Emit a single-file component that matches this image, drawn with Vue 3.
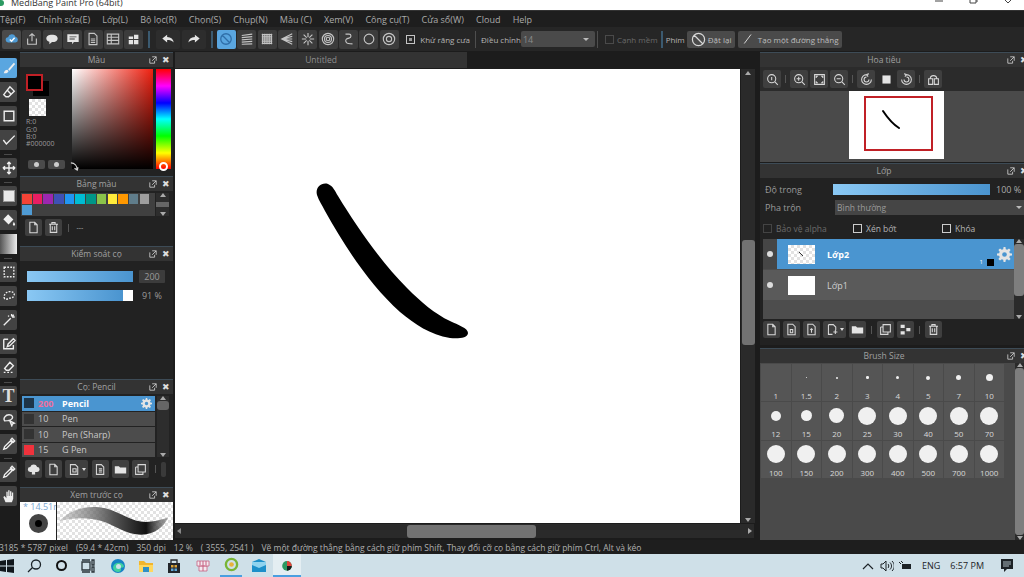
<template>
  <div class="app">
    <div class="titlebar">
      <span class="app-dot"></span>
      <span class="title-text">MediBang Paint Pro (64bit)</span>
      <div class="win-btns">
        <svg width="12" height="10" viewBox="0 0 12 10"><path d="M2 1h8" /></svg>
        <svg width="12" height="10" viewBox="0 0 12 10"><path d="M2 0v3h6V0M8 1h2" /></svg>
        <svg width="12" height="10" viewBox="0 0 12 10"><path d="M2 0l3 3 3-3" /></svg>
      </div>
    </div>

    <div class="menubar">
      <span v-for="m in menus" :key="m">{{ m }}</span>
    </div>

    <div class="toolbar">
      <button
        v-for="b in fileTools"
        :key="b.id"
        class="tb-btn"
        :class="{ cloud: b.id === 'cloud' }"
      >
        <svg class="ic" viewBox="0 0 16 16">
          <path :class="{ fill: b.fill }" :d="b.d" />
          <path v-if="b.d2" class="tick" :d="b.d2" />
        </svg>
      </button>
      <i class="tb-sep blue sep-a"></i>
      <button v-for="b in undoTools" :key="b.id" class="tb-btn undo">
        <svg class="ic" viewBox="0 0 16 16"><path class="fill" :d="b.d" /></svg>
      </button>
      <i class="tb-sep blue sep-b"></i>
      <button
        v-for="b in snapTools"
        :key="b.id"
        class="tb-btn"
        :class="{ active: b.id === 'off' }"
      >
        <svg class="ic" viewBox="0 0 16 16"><path :class="{ fill: b.fill }" :d="b.d" /></svg>
      </button>
      <span class="check on cb-a"></span>
      <span class="tb-label">Khử răng cưa</span>
      <i class="tb-sep sep-c"></i>
      <span class="tb-label">Điều chỉnh</span>
      <div class="tb-select"><span>14</span><b></b></div>
      <i class="tb-sep sep-d"></i>
      <span class="check off"></span>
      <span class="tb-label dim">Cạnh mềm</span>
      <i class="tb-sep blue sep-e"></i>
      <span class="tb-label">Phím</span>
      <button class="text-btn reset">
        <svg class="ic" width="15" height="15" viewBox="0 0 16 16"><path d="M8 1.500a6.500 6.500 0 1 0 0 13 6.500 6.500 0 0 0 0-13zM3.500 3.500l9 9" /></svg>
        Đặt lại
      </button>
      <button class="text-btn line">
        <svg class="ic" width="12" height="12" viewBox="0 0 16 16"><path d="M3 14L12 2" /></svg>
        Tạo một đường thẳng
      </button>
    </div>

    <div class="main">
      <div class="toolcol">
        <template v-for="t in tools" :key="t.id">
          <i v-if="t.sep" class="tool-sep"></i>
          <button v-else class="tool" :class="{ active: t.id === 'brush' }">
            <span v-if="t.id === 'text'" class="tool-t">T</span>
            <span v-else-if="t.id === 'color'" class="tool-color"></span>
            <span v-else-if="t.id === 'grad'" class="tool-grad"></span>
            <svg v-else class="ic" viewBox="0 0 16 16"><path :class="{ fill: t.fill, dash: t.dash }" :d="t.d" /></svg>
          </button>
        </template>
      </div>

      <div class="leftcol">
        <section class="panel p-color">
          <header class="p-head">Màu<span class="p-btns"><svg class="ic undock" viewBox="0 0 10 10"><path :d="ic.undock" /></svg><i class="close">✖</i></span></header>
          <div class="color-body">
            <div class="color-side">
              <div class="swatches">
                <span class="bg-swatch"></span>
                <span class="fg-swatch"></span>
              </div>
              <span class="alpha-swatch checker"></span>
              <div class="rgb">
                <div>R:0</div>
                <div>G:0</div>
                <div class="b-line">B:0</div>
                <div>#000000</div>
              </div>
              <div class="color-btns"><span><i></i></span><span><i></i></span></div>
            </div>
            <div class="sv-box">
              <svg class="ic swap" width="9" height="9" viewBox="0 0 10 10"><path d="M1 1c4 0 7 3 7 8M5 7l3 2 1-3" /></svg>
            </div>
            <div class="hue-bar"><span class="hue-ring"></span></div>
          </div>
        </section>

        <section class="panel p-palette">
          <header class="p-head">Bảng màu<span class="p-btns"><svg class="ic undock" viewBox="0 0 10 10"><path :d="ic.undock" /></svg><i class="close">✖</i></span></header>
          <div class="palette-row">
            <div class="palette">
              <span v-for="c in palette" :key="c" :style="{ background: c }"></span>
            </div>
            <div class="pal-scroll"><i class="up"></i><b></b><i class="down"></i></div>
          </div>
          <div class="pal-tools">
            <button class="icon-btn">
              <svg class="ic" viewBox="0 0 16 16"><path :d="ic.doc" /></svg>
            </button>
            <button class="icon-btn">
              <svg class="ic" viewBox="0 0 16 16"><path :d="ic.trash" /></svg>
            </button>
            <i class="mini-sep"></i>
            <span class="dash-text">---</span>
          </div>
        </section>

        <section class="panel p-control">
          <header class="p-head">Kiểm soát cọ<span class="p-btns"><svg class="ic undock" viewBox="0 0 10 10"><path :d="ic.undock" /></svg><i class="close">✖</i></span></header>
          <div class="ctl-row">
            <div class="slider"><div class="slider-fill" :style="{ width: '100%' }"></div></div>
            <span class="val box">200</span>
          </div>
          <div class="ctl-row second">
            <div class="slider"><div class="slider-fill" :style="{ width: '91%' }"></div></div>
            <span class="val">91 %</span>
          </div>
        </section>

        <section class="panel p-brush">
          <header class="p-head">Cọ: Pencil<span class="p-btns"><svg class="ic undock" viewBox="0 0 10 10"><path :d="ic.undock" /></svg><i class="close">✖</i></span></header>
          <div class="brush-wrap">
            <div class="brush-list">
              <div v-for="b in brushes" :key="b.name" class="brush-row" :class="{ sel: b.sel }">
                <span class="b-chip" :style="{ background: b.color }"></span>
                <span class="b-size">{{ b.size }}</span>
                <span class="b-name">{{ b.name }}</span>
                <svg v-if="b.sel" class="ic b-gear" width="11" height="11" viewBox="0 0 16 16"><path class="fill" :d="ic.gear" /></svg>
              </div>
            </div>
            <div class="brush-scroll"><i class="up"></i><b></b><i class="down"></i></div>
          </div>
          <div class="brush-tools">
            <button v-for="b in brushBtns" :key="b.id" class="icon-btn" :class="{ wide: b.id === 'add' }">
              <svg class="ic" viewBox="0 0 16 16"><path :class="{ fill: b.fill }" :d="b.d" /></svg>
              <em v-if="b.id === 'add'"></em>
            </button>
            <i class="mini-sep"></i>
            <span class="mini-thumb"></span>
          </div>
        </section>

        <section class="panel p-preview">
          <header class="p-head">Xem trước cọ<span class="p-btns"><svg class="ic undock" viewBox="0 0 10 10"><path :d="ic.undock" /></svg><i class="close">✖</i></span></header>
          <div class="preview-body">
            <div class="pv-tip">
              <span class="pv-size">* 14.51m</span>
              <span class="pv-dot"></span>
            </div>
            <div class="pv-stroke checker">
              <svg viewBox="0 0 115 36" preserveAspectRatio="none">
                <defs>
                  <linearGradient id="pvg" x1="0" x2="1" y1="0" y2="0">
                    <stop offset="0" stop-color="#999" stop-opacity=".4" />
                    <stop offset=".5" stop-color="#555" />
                    <stop offset=".8" stop-color="#111" />
                    <stop offset="1" stop-color="#666" stop-opacity=".5" />
                  </linearGradient>
                </defs>
                <path d="M2 18C14 7 30 2 48 6c16 4 26 13 40 13 8 0 14-2 22-4-4 9-14 16-26 16C68 31 58 22 44 18 30 14 16 15 2 18z" fill="url(#pvg)" />
              </svg>
            </div>
          </div>
        </section>
      </div>

      <div class="center">
        <div class="tabbar"><div class="doc-tab">Untitled</div></div>
        <div class="canvas-row">
          <div class="canvas">
            <svg viewBox="0 0 565 454" width="565" height="454">
              <path
                d="M142 126C140 119 146 113 153 115C158 117 160 122 163 127C180 155 205 192 232 219C246 233 260 245 275 252C283 256 293 259 293 264C293 269 283 270 275 269C255 266 240 255 225 243C195 216 170 178 150 142C147 136 144 132 142 126Z"
                fill="#000"
              />
            </svg>
          </div>
          <div class="v-scroll">
            <i class="up"></i>
            <div class="v-thumb"></div>
            <i class="down"></i>
          </div>
        </div>
        <div class="h-scroll">
          <i class="left"></i>
          <div class="h-thumb"></div>
          <i class="right"></i>
        </div>
      </div>

      <div class="rightcol">
        <section class="panel p-nav">
          <header class="p-head">Hoa tiêu<span class="p-btns"><svg class="ic undock" viewBox="0 0 10 10"><path :d="ic.undock" /></svg><i class="close">✖</i></span></header>
          <div class="nav-tools">
            <template v-for="b in navBtns" :key="b.id">
              <i v-if="b.sep" class="mini-sep"></i>
              <button v-else class="icon-btn" :class="{ dark: b.id === 'fit' }">
                <svg class="ic" viewBox="0 0 16 16"><path :class="{ fill: b.fill }" :d="b.d" /></svg>
              </button>
            </template>
          </div>
          <div class="nav-view">
            <div class="nav-page">
              <div class="nav-frame">
                <svg width="24" height="24" viewBox="0 0 24 24">
                  <path d="M1 1c4 6 8 12 16 17" fill="none" stroke="#000" stroke-width="2" stroke-linecap="round" />
                </svg>
              </div>
            </div>
          </div>
        </section>

        <section class="panel p-layer">
          <header class="p-head">Lớp<span class="p-btns"><svg class="ic undock" viewBox="0 0 10 10"><path :d="ic.undock" /></svg><i class="close">✖</i></span></header>
          <div class="ly-row">
            <label>Độ trong</label>
            <div class="slider ly-slider"><div class="slider-fill" :style="{ width: '100%' }"></div></div>
            <span class="ly-val">100 %</span>
          </div>
          <div class="ly-row blend">
            <label>Pha trộn</label>
            <div class="ly-select"><span>Bình thường</span><b></b></div>
          </div>
          <div class="ly-checks">
            <span class="lc alpha"><i class="check off"></i><em class="dim">Bảo vệ alpha</em></span>
            <span class="lc clip"><i class="check"></i><em>Xén bớt</em></span>
            <span class="lc"><i class="check"></i><em>Khóa</em></span>
          </div>
          <div class="ly-listwrap">
            <div class="ly-list">
              <div v-for="l in layers" :key="l.name" class="layer" :class="{ sel: l.sel }">
                <span class="eye"><i></i></span>
                <div class="layer-main">
                  <span class="thumb" :class="{ checker: l.sel }">
                    <svg v-if="l.sel" width="27" height="19" viewBox="0 0 27 19"><path d="M11 7l4 4" stroke="#333" fill="none" /></svg>
                  </span>
                  <span class="lname">{{ l.name }}</span>
                  <template v-if="l.sel">
                    <span class="l-one">1</span>
                    <span class="l-chip"></span>
                    <svg class="ic l-gear" width="15" height="15" viewBox="0 0 16 16"><path class="fill" :d="ic.gear" /></svg>
                  </template>
                </div>
              </div>
            </div>
            <div class="ly-scroll"><i class="up"></i><b></b><i class="down"></i></div>
          </div>
          <div class="ly-tools">
            <template v-for="b in layerBtns" :key="b.id">
              <i v-if="b.sep" class="mini-sep"></i>
              <button v-else class="icon-btn" :class="{ wide: b.id === 'add' }">
                <svg class="ic" viewBox="0 0 16 16"><path :class="{ fill: b.fill }" :d="b.d" /></svg>
                <em v-if="b.id === 'add'"></em>
              </button>
            </template>
          </div>
        </section>

        <section class="panel p-size">
          <header class="p-head">Brush Size<span class="p-btns"><svg class="ic undock" viewBox="0 0 10 10"><path :d="ic.undock" /></svg><i class="close">✖</i></span></header>
          <div class="size-body">
            <div class="size-grid">
              <div v-for="s in sizes" :key="s.label" class="size-cell">
                <div class="dot-wrap"><span class="dot" :style="{ width: s.d + 'px', height: s.d + 'px' }"></span></div>
                <span class="size-label">{{ s.label }}</span>
              </div>
            </div>
            <div class="size-scroll"><i class="up"></i><b></b><i class="down"></i></div>
          </div>
        </section>
      </div>
    </div>

    <div class="statusbar">
      <span>3185 * 5787 pixel</span>
      <span>(59.4 * 42cm)</span>
      <span>350 dpi</span>
      <span>12 %</span>
      <span>( 3555, 2541 )</span>
      <span>Vẽ một đường thẳng bằng cách giữ phím Shift, Thay đổi cỡ cọ bằng cách giữ phím Ctrl, Alt và kéo</span>
    </div>

    <div class="taskbar">
      <svg class="tk win" width="14" height="14" viewBox="0 0 14 14"><path d="M0 2l6-1v5.500H0zM7 1l7-1v6.500H7zM0 7.500h6V13l-6-1zM7 7.500h7V14l-7-1z" fill="#10171c" /></svg>
      <svg class="tk search" width="16" height="16" viewBox="0 0 16 16"><path d="M10 2a4.500 4.500 0 1 0 0 9 4.500 4.500 0 0 0 0-9zM6.500 9.500L2 14" fill="none" stroke="#1b2328" stroke-width="1.300" /></svg>
      <span class="tk cortana"></span>
      <svg class="tk taskview" width="14" height="14" viewBox="0 0 14 14"><path d="M1 3h8v8H1zM1 1h8M1 13h8M11 1h2v5h-2zM11 8h2v5h-2z" fill="none" stroke="#2a3338" stroke-width="1.300" /></svg>
      <svg class="tk edge" width="16" height="16" viewBox="0 0 16 16"><circle cx="8" cy="8" r="7" fill="#1683c4" /><path d="M3 9c1-5 9-6 11-1 0 2-3 2-4 1 2 3 1 4-1 5-4 0-6-2-6-5z" fill="#3fd0a0" /><circle cx="8.500" cy="8.500" r="2.500" fill="#cfe0e8" /></svg>
      <svg class="tk explorer" width="16" height="16" viewBox="0 0 16 16"><path d="M1 3h5l2 2h7v3H1z" fill="#f1b52c" /><path d="M1 7h14v7H1z" fill="#ffd75e" /><path d="M5 9h6v5H5z" fill="#2f8fc5" /></svg>
      <svg class="tk store" width="14" height="16" viewBox="0 0 14 16"><path d="M1 5h12v10H1z" fill="#23262a" /><path d="M4 5V2h6v3" fill="none" stroke="#23262a" stroke-width="1.300" /><path d="M4 7h2.500v2.500H4zM7.500 7H10v2.500H7.500z" fill="#d9a43a" /><path d="M4 10.500h2.500V13H4zM7.500 10.500H10V13H7.500z" fill="#5fa6d6" /></svg>
      <svg class="tk gift" width="16" height="16" viewBox="0 0 16 16"><path d="M2 3h12v5H2zM4 8h8v5H4z" fill="#f3e9ef" stroke="#c65f80" stroke-width=".8" /><path d="M8 3v10M5 3v4M11 3v4" stroke="#c65f80" fill="none" /></svg>
      <div class="tk-app run">
        <svg width="15" height="15" viewBox="0 0 16 16"><circle cx="8" cy="8" r="6" fill="none" stroke="#79b536" stroke-width="2.500" /><circle cx="8" cy="8" r="2.500" fill="#e8b23a" /></svg>
      </div>
      <svg class="tk mail" width="16" height="14" viewBox="0 0 16 14"><path d="M1 3l7-3 7 3v10H1z" fill="#1c8fc9" /><path d="M1 6l7 3 7-3v-3H1z" fill="#8fd3ef" /></svg>
      <div class="tk-app current">
        <svg width="14" height="14" viewBox="0 0 16 16"><circle cx="8" cy="9" r="5.500" fill="#2c9a62" /><path d="M8 9V3.500A5.500 5.500 0 0 1 13.500 9z" fill="#e2453c" /><path d="M8 9h5.500A5.500 5.500 0 0 1 8 14.500z" fill="#1c1c1c" /></svg>
      </div>
      <div class="tray">
        <svg class="t-chev" width="12" height="8" viewBox="0 0 12 8"><path d="M1 7l5-5 5 5" fill="none" stroke="#1d2327" stroke-width="1.200" /></svg>
        <svg class="t-vol" width="14" height="12" viewBox="0 0 14 12"><path d="M1 4h2l3-3v10L3 8H1zM8 4c1 1 1 3 0 4M10 2.500c2 2 2 5 0 7M12 1c3 3 3 7 0 10" fill="none" stroke="#1d2327" /></svg>
        <svg class="t-net" width="12" height="9" viewBox="0 0 12 9"><path d="M3 3h9v5H3z" fill="#1d2327" /><path d="M0 1l2 2M2 0l2 2" stroke="#1d2327" fill="none" /></svg>
        <span class="t-lang">ENG</span>
        <span class="t-time">6:57 PM</span>
        <svg class="t-note" width="12" height="13" viewBox="0 0 12 13"><path d="M0 0h12v10H6l-3 3v-3H0z" fill="#1d2327" /><path d="M2 3h8M2 5h8M2 7h6" stroke="#cfe0e8" stroke-width=".8" fill="none" /></svg>
      </div>
    </div>
  </div>
</template>

<script setup>
const menus = [
  "Tệp(F)",
  "Chỉnh sửa(E)",
  "Lớp(L)",
  "Bộ lọc(R)",
  "Chọn(S)",
  "Chụp(N)",
  "Màu (C)",
  "Xem(V)",
  "Công cụ(T)",
  "Cửa sổ(W)",
  "Cloud",
  "Help",
];

const ic = {
  undock: "M1 3v6h6V6M4 1h5v5M4 6l5-5",
  doc: "M3.500 1.500h6l3 3v10h-9zM9.500 1.500v3h3",
  trash: "M2.500 4h11M6 4V2h4v2M4 4v10h8V4M6.500 6.500v5M9.500 6.500v5",
  folder: "M1 4h5l1.500 1.500H15V13H1z",
  copy: "M5 2h9v9H5zM2 5h3M2 5v9h9v-3",
  gear: "M7 0h2l.4 2.300 1.500.6L12.800 1.500l1.700 1.700-1.400 1.900.6 1.500 2.300.4v2l-2.300.4-.6 1.500 1.400 1.900-1.700 1.700-1.900-1.400-1.500.6L9 16H7l-.4-2.300-1.500-.6-1.900 1.400-1.700-1.700 1.400-1.900-.6-1.500L0 9V7l2.300-.4.6-1.500-1.400-1.900 1.700-1.700 1.900 1.400 1.500-.6zM8 5.500a2.500 2.500 0 1 0 0 5 2.500 2.500 0 0 0 0-5z",
  cloudUp: "M4 11a3 3 0 0 1 0-6 4.500 4.500 0 0 1 8.500 0 3 3 0 0 1 0 6H10v3H6v-3z",
};

const fileTools = [
  { id: "cloud", fill: true, d: "M4 12a3 3 0 0 1-.5-6A4.500 4.500 0 0 1 12 5.500 3.300 3.300 0 0 1 12 12z", d2: "M5.500 8.500l2 2 3.500-4" },
  { id: "share", d: "M3 7.500v6.500h10V7.500M8 10.500V2M5 4.800L8 2l3 2.800" },
  { id: "bubble", fill: true, d: "M8 3c4 0 6.500 1.800 6.500 4.300S12 11.500 8 11.500l-3 2.500v-3C2.800 10.300 1.500 9 1.500 7.300 1.500 4.800 4 3 8 3z" },
  { id: "comment", fill: true, d: "M1.500 2.500h13v9H9l-2 2.500v-2.500H1.500zM4 5v1h8V5zM4 7.500v1h6v-1z" },
  { id: "page", d: "M3.500 1.500h6l3 3v10h-9zM5.500 8h5M5.500 10h5M5.500 12h5" },
  { id: "list", d: "M1.500 2.500h13v11h-13zM1.500 6h13M1.500 9.500h13M6 2.500v11" },
  { id: "panels", fill: true, d: "M2 5h5v3H2zM2 9h5v5H2zM8 3h5v5H8zM8 9h5v5H8z" },
];

const undoTools = [
  { id: "undo", d: "M7 3L1.500 7.500 7 12V9.200c3 0 5.500.6 7.500 2.800-.5-3.800-3-6-7.500-6.300z" },
  { id: "redo", d: "M9 3l5.500 4.500L9 12V9.200c-3 0-5.500.6-7.500 2.800.5-3.800 3-6 7.500-6.300z" },
];

const snapTools = [
  { id: "off", d: "M8 2a6 6 0 1 0 0 12A6 6 0 0 0 8 2zM3.800 3.800l8.400 8.400" },
  { id: "para", d: "M2 4l12-1.500M2 6.500l12-1.200M2 9l12-1M2 11.500l12-.8M2 14l12-.5" },
  { id: "grid", d: "M3 2v12M5.500 2v12M8 2v12M10.500 2v12M13 2v12M2 3h12M2 5.500h12M2 8h12M2 10.500h12M2 13h12" },
  { id: "persp", d: "M14 2L2 8l12 6M14 5L2 8l12 3M14 8H2" },
  { id: "radial", d: "M8 1v5M8 10v5M1 8h5M10 8h5M3 3l3.500 3.500M13 3L9.500 6.500M3 13l3.500-3.500M13 13L9.500 9.500" },
  { id: "conc", d: "M8 1.500a6.500 6.500 0 1 0 0 13 6.500 6.500 0 0 0 0-13zM8 4a4 4 0 1 0 0 8 4 4 0 0 0 0-8zM8 6a2 2 0 1 0 0 4 2 2 0 0 0 0-4z" },
  { id: "curve", d: "M4 2.500h4c3 0 3 4 0 4.500S3 9 5 12c1 1.500 4 1.500 7 1.500" },
  { id: "ring", d: "M8 2.500a5.500 5.500 0 1 0 0 11 5.500 5.500 0 0 0 0-11z" },
  { id: "gearring", d: "M8 1.500a6.500 6.500 0 1 0 0 13 6.500 6.500 0 0 0 0-13zM8 5a3 3 0 1 0 0 6 3 3 0 0 0 0-6z" },
];

const tools = [
  { id: "brush", d: "M2 14c1-3 2-4 4-4l1.500 1.500C7 13.500 5 14.500 2 14zM7 9.500L13.500 2 15 3.500 8.500 11z", fill: true },
  { id: "eraser", d: "M9 2l5 5-6.500 6.500h-3L2 11zM5.500 5.500l5 5" },
  { id: "rect", d: "M2.500 2.500h11v11h-11z" },
  { id: "linecon", d: "M1.500 8l3.500 4.500L14.500 3" },
  { id: "s1", sep: true },
  { id: "move", d: "M8 1v14M1 8h14M8 1L6 3.500M8 1l2 2.500M8 15l-2-2.500M8 15l2-2.500M1 8l2.500-2M1 8l2.500 2M15 8l-2.500-2M15 8l-2.500 2" },
  { id: "s2", sep: true },
  { id: "color" },
  { id: "bucket", fill: true, d: "M7 1.500l6 6-5.500 5.500-6-6zM13.500 10c1 1.500 1.500 2.500 1.500 3.200a1.300 1.300 0 0 1-2.600 0c0-.7.500-1.700 1.100-3.200z" },
  { id: "grad" },
  { id: "s3", sep: true },
  { id: "selrect", d: "M2.500 2.500h11v11h-11z", dash: true },
  { id: "lasso", d: "M3 11C1 8 4 3 9 3c4 0 6 2 4.500 5S9 10 7 11s-3 1-4 0z", dash: true },
  { id: "wand", d: "M2 14L10 6M11 1v3M14.500 4.500h-3M13.500 2l-2 2M7 3l1 1" },
  { id: "selpen", d: "M2 2.500h5M2 2.500v11h11V9M6 11l1-3 6-6 2 2-6 6z" },
  { id: "selerase", d: "M9 1.500l4 4-5 5H5l-2-2zM2 13h2M6 13h2M10 13h2" },
  { id: "s4", sep: true },
  { id: "text" },
  { id: "lassofill", d: "M3 9C1 6 4 2 8 2s5 3 3 5-5 2-8 2zM9 9l5 2.500-2 .8-.8 2.200z" },
  { id: "dropper", d: "M2 14l1-3 6.500-6.500 2 2L5 13zM10 3l1.500-1.500 3 3L13 6z" },
  { id: "s5", sep: true },
  { id: "dropper2", d: "M2 14l1-3 6.500-6.500 2 2L5 13zM10 3l1.500-1.500 3 3L13 6z" },
  { id: "hand", fill: true, d: "M4 15L1.500 9 3 8l2 2.500V3h1.500v5h.6V1.500h1.500V8h.6V2.500h1.500V8h.6V4h1.500v7l-1.500 4z" },
];

const palette = [
  "#f44336", "#e91e63", "#9c27b0", "#3f51b5", "#2196f3", "#00bcd4",
  "#009688", "#8bc34a", "#ffeb3b", "#ff9800", "#607d8b", "#9e9e9e", "#4f9bd4",
];

const brushes = [
  { name: "Pencil", size: 200, color: "#1d3448", sel: true },
  { name: "Pen", size: 10, color: "#333" },
  { name: "Pen (Sharp)", size: 10, color: "#333" },
  { name: "G Pen", size: 15, color: "#f0323c" },
];

const brushBtns = [
  { id: "cloud", fill: true, d: ic.cloudUp },
  { id: "doc", d: ic.doc },
  { id: "add", d: "M3 2h6l3 3v9H3zM6 7h4v4H6z" },
  { id: "s", d: "M3 2h6l3 3v9H3zM6 7h4M6 9h4M6 11h4" },
  { id: "folder", fill: true, d: ic.folder },
  { id: "copy", d: ic.copy },
];

const navBtns = [
  { id: "z1", d: "M7 2a5 5 0 1 0 0 10A5 5 0 0 0 7 2zM11 11l3.500 3.500M7 5v4" },
  { id: "s1", sep: true },
  { id: "zin", d: "M7 2a5 5 0 1 0 0 10A5 5 0 0 0 7 2zM11 11l3.500 3.500M4.500 7h5M7 4.500v5" },
  { id: "full", d: "M2 2h12v12H2zM4 6V4h2M10 4h2v2M12 10v2h-2M6 12H4v-2" },
  { id: "zout", d: "M7 2a5 5 0 1 0 0 10A5 5 0 0 0 7 2zM11 11l3.500 3.500M4.500 7h5" },
  { id: "s2", sep: true },
  { id: "rotl", d: "M8 2a6 6 0 1 0 6 6M8 5a3 3 0 1 0 3 3M8 2l3-1M8 2l2 2.500" },
  { id: "fit", fill: true, d: "M3 3h10v10H3z" },
  { id: "rotr", d: "M8 2a6 6 0 1 1-6 6M8 5a3 3 0 1 1-3 3M8 2L5 1M8 2L6 4.500" },
  { id: "s3", sep: true },
  { id: "flip", d: "M2 7h5v7H2zM9 7h5v7H9zM4 7c0-5 8-5 8 0" },
];

const layerBtns = [
  { id: "doc", d: ic.doc },
  { id: "d8", d: "M3.500 1.500h6l3 3v10h-9zM6.500 8h3v4h-3z" },
  { id: "d1", d: "M3.500 1.500h6l3 3v10h-9zM8 7v5M6.500 8.500L8 7l1.500 1.500" },
  { id: "add", d: "M3 2h6l3 3v4M3 2v12h5M9 11h5M11.500 8.500v5" },
  { id: "folder", fill: true, d: ic.folder },
  { id: "s1", sep: true },
  { id: "copy", d: ic.copy },
  { id: "merge", fill: true, d: "M2 2h5v4H2zM2 10h5v4H2zM9 6h5v4H9z" },
  { id: "s2", sep: true },
  { id: "trash", d: ic.trash },
];

const layers = [
  { name: "Lớp2", sel: true },
  { name: "Lớp1", sel: false },
];

const sizes = [
  { label: "1", d: 0 }, { label: "1.5", d: 1 }, { label: "2", d: 2 }, { label: "3", d: 2.5 },
  { label: "4", d: 3 }, { label: "5", d: 4 }, { label: "7", d: 5 }, { label: "10", d: 7 },
  { label: "12", d: 10 }, { label: "15", d: 11 }, { label: "20", d: 15 }, { label: "25", d: 18 },
  { label: "30", d: 18 }, { label: "40", d: 18 }, { label: "50", d: 18 }, { label: "70", d: 18 },
  { label: "100", d: 18 }, { label: "150", d: 18 }, { label: "200", d: 18 }, { label: "300", d: 18 },
  { label: "400", d: 18 }, { label: "500", d: 18 }, { label: "700", d: 18 }, { label: "1000", d: 18 },
];
</script>

<style scoped>
.app {
  width: 1024px;
  height: 577px;
  overflow: hidden;
  display: flex;
  flex-direction: column;
  background: #1e1e1e;
  color: #b4b4b4;
  font-family: "Open Sans", "Noto Sans", sans-serif;
  font-size: 9px;
}
button {
  border: 0;
  padding: 0;
  font: inherit;
  color: inherit;
}
.ic path {
  fill: none;
  stroke: #d8d8d8;
  stroke-width: 1.300;
}
.ic path.fill {
  fill: #e4e4e4;
  stroke: none;
  fill-rule: evenodd;
}
.ic path.dash {
  stroke-dasharray: 2 1.500;
}
.ic path.tick {
  stroke: #fff;
  stroke-width: 1.600;
}
i {
  font-style: normal;
}
em {
  font-style: normal;
}

/* title */
.titlebar {
  height: 10px;
  flex: none;
  background: #fff;
  display: flex;
  align-items: flex-end;
  overflow: hidden;
  border-bottom: 1px solid #333;
  color: #333;
}
.app-dot {
  width: 6px;
  height: 6px;
  margin: 0 7px 4px -2px;
  border-radius: 50%;
  background: #2c9a62;
}
.title-text {
  font-size: 9px;
  line-height: 10px;
  margin-bottom: 2px;
}
.win-btns {
  margin-left: auto;
  display: flex;
  gap: 23px;
  padding-right: 9px;
  align-self: flex-start;
}
.win-btns path {
  fill: none;
  stroke: #444;
}

/* menu */
.menubar {
  height: 16px;
  flex: none;
  background: #1e1e1e;
  display: flex;
  align-items: center;
  gap: 12.200px;
  font-size: 9px;
  color: #aaa;
}

/* toolbar */
.toolbar {
  height: 24px;
  flex: none;
  display: flex;
  align-items: center;
  padding-left: 2px;
  background: #262626;
}
.tb-btn {
  width: 19px;
  height: 19px;
  flex: none;
  margin-right: 1.400px;
  border-radius: 2px;
  background: #3c3c3c;
  display: flex;
  align-items: center;
  justify-content: center;
}
.tb-btn svg {
  width: 14px;
  height: 14px;
}
.tb-btn .ic path {
  stroke: #c4c4c4;
}
.tb-btn .ic path.fill {
  stroke: none;
}
.tb-btn.cloud {
  background: #4a4a4a;
}
.tb-btn.cloud path.fill {
  fill: #4f9bd4;
}
.tb-btn.cloud .ic path.tick {
  stroke: #fff;
}
.tb-btn.undo {
  width: 24px;
  background: #2d2d2d;
  margin-right: 2px;
}
.tb-btn.active {
  background: #5aa6e0;
}
.tb-btn.active .ic path {
  stroke: #2f6ea8;
  stroke-width: 1.500;
}
.tb-sep {
  width: 1px;
  height: 17px;
  flex: none;
  background: #4e4e4e;
}
.tb-sep.blue {
  width: 2px;
  background: #3b5a70;
}
.sep-a {
  margin: 0 6px 0 3px;
}
.sep-b {
  margin: 0 4px 0 3px;
}
.sep-c {
  margin: 0 5px 0 5px;
}
.sep-d {
  margin: 0 7px 0 2px;
}
.sep-e {
  margin: 0 3px 0 3px;
}
.cb-a {
  margin-left: 6px;
  margin-right: 5px;
}
.check {
  width: 7px;
  height: 7px;
  flex: none;
  display: inline-block;
  border: 1px solid #c4c4c4;
}
.check.on {
  background: linear-gradient(#9a9a9a, #9a9a9a) center / 3px 3px no-repeat;
}
.check.off {
  border-color: #4a4a4a;
  margin-right: 3px;
}
.tb-label {
  font-size: 8px;
  white-space: nowrap;
}
.dim {
  color: #6a6a6a;
}
.tb-select {
  width: 74px;
  height: 16px;
  background: #4a4a4a;
  border-radius: 2px;
  display: flex;
  align-items: center;
  justify-content: space-between;
  padding: 0 6px 0 2px;
  box-sizing: border-box;
  color: #8a8a8a;
}
.tb-select b,
.ly-select b {
  border: 3px solid transparent;
  border-top-color: #bbb;
  margin-top: 3px;
}
.text-btn {
  height: 17px;
  display: flex;
  align-items: center;
  gap: 2px;
  background: #4a4a4a;
  border-radius: 2px;
  font-size: 8px;
  white-space: nowrap;
  color: #bdbdbd;
  box-sizing: border-box;
}
.reset {
  width: 48px;
  margin-left: 2px;
  padding-left: 4px;
}
.line {
  width: 104px;
  margin-left: 3px;
  padding-left: 4px;
  gap: 4px;
}

/* main */
.main {
  flex: 1;
  min-height: 0;
  display: flex;
  background: #1c1c1c;
}
.toolcol {
  width: 20px;
  flex: none;
  display: flex;
  flex-direction: column;
  align-items: flex-start;
  padding-top: 7px;
  gap: 4px;
  box-sizing: border-box;
}
.tool {
  width: 17px;
  height: 20px;
  flex: none;
  border-radius: 0 2px 2px 0;
  background: #434343;
  display: flex;
  align-items: center;
  justify-content: center;
}
.tool svg {
  width: 14px;
  height: 14px;
}
.tool .ic path {
  stroke: #eee;
  stroke-width: 1.600;
}
.tool .ic path.fill {
  fill: #eee;
  stroke: none;
}
.tool.active {
  background: #5aa6e0;
}
.tool-sep {
  width: 8px;
  height: 1px;
  flex: none;
  margin: -0.500px 4px;
  background: #4a4a4a;
}
.tool-t {
  font-family: "Liberation Serif", serif;
  font-weight: 700;
  font-size: 18px;
  color: #ddd;
  line-height: 18px;
}
.tool-color {
  width: 10px;
  height: 10px;
  background: #e8e8e8;
  border: 1px solid #999;
}
.tool-grad {
  width: 17px;
  height: 20px;
  background: linear-gradient(90deg, #555, #eee);
}

.checker {
  background-color: #fff;
  background-image: linear-gradient(45deg, #e2e2e2 25%, transparent 25%, transparent 75%, #e2e2e2 75%),
    linear-gradient(45deg, #e2e2e2 25%, transparent 25%, transparent 75%, #e2e2e2 75%);
  background-size: 6px 6px;
  background-position: 0 0, 3px 3px;
}

/* panels */
.leftcol {
  width: 153px;
  flex: none;
  display: flex;
  flex-direction: column;
  padding-top: 1px;
  box-sizing: border-box;
}
.panel {
  display: flex;
  flex-direction: column;
  background: #222;
  border-top: 1px solid #3d4b56;
}
.p-head {
  height: 14px;
  flex: none;
  position: relative;
  background: #333;
  text-align: center;
  font-size: 8.500px;
  line-height: 14px;
  color: #a0a0a0;
}
.p-btns {
  position: absolute;
  right: 3px;
  top: 2px;
  display: flex;
  align-items: center;
  gap: 5px;
}
.undock {
  width: 8px;
  height: 8px;
}
.undock path {
  stroke-width: 1;
}
.close {
  font-size: 9px;
  line-height: 10px;
  color: #ddd;
}
.rightcol .p-head {
  padding-right: 16px;
}
.rightcol .p-btns {
  right: -4px;
}

.p-color {
  height: 123px;
  flex: none;
}
.color-body {
  display: flex;
  flex: 1;
  padding: 2px 2px 7px 6px;
  gap: 3px;
  min-height: 0;
}
.color-side {
  width: 43px;
  flex: none;
  padding-top: 5px;
  box-sizing: border-box;
}
.swatches {
  position: relative;
  height: 25px;
}
.fg-swatch {
  position: absolute;
  left: 0;
  top: 0;
  width: 13px;
  height: 13px;
  background: #000;
  border: 2px solid #c02026;
}
.bg-swatch {
  position: absolute;
  left: 7px;
  top: 7px;
  width: 16px;
  height: 15px;
  background: #000;
}
.alpha-swatch {
  display: block;
  width: 17px;
  height: 17px;
  margin-left: 3px;
}
.rgb {
  margin-top: 2px;
  font-size: 7px;
  line-height: 8px;
  color: #9a9a9a;
}
.b-line {
  line-height: 6px;
}
.color-btns {
  display: flex;
  gap: 3px;
  margin-top: 12px;
  margin-left: 2px;
}
.color-btns span {
  width: 17px;
  height: 9px;
  background: #4a4a4a;
  border-radius: 2px;
  display: flex;
  justify-content: center;
  align-items: center;
}
.color-btns i {
  width: 5px;
  height: 5px;
  border-radius: 50%;
  background: #ccc;
}
.sv-box {
  width: 81px;
  flex: none;
  position: relative;
  background: linear-gradient(to top, #000, transparent), linear-gradient(to right, #fff, #f02010);
}
.swap {
  position: absolute;
  left: -2px;
  bottom: -2px;
}
.hue-bar {
  width: 15px;
  flex: none;
  position: relative;
  background: linear-gradient(to bottom, #f00, #f0f 17%, #00f 34%, #0ff 50%, #0f0 67%, #ff0 84%, #f00);
}
.hue-ring {
  position: absolute;
  left: 3px;
  bottom: -2px;
  width: 5px;
  height: 5px;
  border: 2px solid #fff;
  border-radius: 50%;
}

.p-palette {
  height: 69px;
  flex: none;
}
.palette-row {
  display: flex;
  padding: 2px 4px 0 1px;
  gap: 1px;
}
.palette {
  width: 134px;
  height: 23px;
  background: #404040;
  display: flex;
  flex-wrap: wrap;
  align-content: flex-start;
  gap: 1px 1.100px;
  padding: 1px;
  box-sizing: border-box;
}
.palette span {
  width: 9.600px;
  height: 10px;
}
.pal-scroll,
.brush-scroll,
.ly-scroll,
.size-scroll {
  display: flex;
  flex-direction: column;
  align-items: center;
  justify-content: space-between;
  flex: none;
}
.pal-scroll {
  width: 13px;
  height: 23px;
  background: #2d2d2d;
}
.pal-scroll b {
  width: 13px;
  height: 5px;
  background: #666;
}
.up {
  flex: none;
  border: 3px solid transparent;
  border-top: 0;
  border-bottom: 4px solid #aaa;
}
.down {
  flex: none;
  border: 3px solid transparent;
  border-bottom: 0;
  border-top: 4px solid #aaa;
}
.pal-tools {
  display: flex;
  align-items: center;
  gap: 2px;
  padding: 3px 0 0 5px;
}
.icon-btn {
  width: 17px;
  height: 17px;
  flex: none;
  border-radius: 2px;
  background: #3f3f3f;
  display: flex;
  align-items: center;
  justify-content: center;
  margin-right: 1.200px;
}
.icon-btn svg {
  width: 13px;
  height: 13px;
}
.icon-btn.dark {
  background: #2b2b2b;
}
.icon-btn.wide {
  width: 23px;
  gap: 1px;
}
.icon-btn em {
  border: 2px solid transparent;
  border-top: 3px solid #ddd;
  border-bottom: 0;
}
.mini-sep {
  width: 1px;
  height: 8px;
  flex: none;
  margin: 0 3px;
  background: #555;
}
.dash-text {
  margin-left: 2px;
  font-size: 7px;
}

.p-control {
  height: 132px;
  flex: none;
}
.ctl-row {
  display: flex;
  align-items: center;
  padding: 9px 0 0 7px;
}
.ctl-row.second {
  padding-top: 6px;
}
.slider {
  width: 106px;
  height: 11px;
  flex: none;
  background: #fff;
}
.slider-fill {
  height: 100%;
  background: linear-gradient(90deg, #8ac8f4, #4a94cf);
}
.val {
  margin-left: 6px;
  width: 26px;
  text-align: center;
  font-size: 9px;
  color: #9a9a9a;
}
.val.box {
  height: 13px;
  line-height: 13px;
  background: #3c3c3c;
  border-radius: 1px;
}

.p-brush {
  height: 107px;
  flex: none;
}
.brush-wrap {
  display: flex;
  padding: 2px 4px 0 2px;
  gap: 2px;
}
.brush-list {
  width: 133px;
  flex: none;
  display: flex;
  flex-direction: column;
  gap: 1px;
}
.brush-row {
  height: 14.500px;
  background: #4c4c4c;
  display: flex;
  align-items: center;
  color: #c8c8c8;
  font-size: 9px;
}
.brush-row.sel {
  background: #4a95d0;
  color: #fff;
  font-weight: 700;
}
.b-chip {
  width: 10px;
  height: 10px;
  margin-left: 2px;
  flex: none;
}
.b-size {
  width: 24px;
  margin-left: 4px;
  flex: none;
}
.brush-row.sel .b-size {
  color: #ef6f9e;
}
.b-gear {
  margin-left: auto;
  margin-right: 3px;
}
.brush-scroll {
  width: 12px;
  height: 61px;
  background: #2d2d2d;
}
.brush-scroll b {
  width: 12px;
  height: 9px;
  margin: 1px 0 auto;
  background: #666;
  border-radius: 3px;
}
.brush-tools {
  display: flex;
  align-items: center;
  gap: 2px;
  padding: 3px 0 0 5px;
}
.brush-tools .icon-btn {
  height: 18px;
}
.mini-thumb {
  width: 5px;
  height: 15px;
  background: #3a3a3a;
  border-radius: 2px;
}

.p-preview {
  flex: 1;
  min-height: 0;
}
.preview-body {
  display: flex;
  flex: 1;
  min-height: 0;
  gap: 1px;
}
.pv-tip {
  width: 36px;
  background: #fff;
  position: relative;
  display: flex;
  align-items: center;
  justify-content: center;
  overflow: hidden;
}
.pv-size {
  position: absolute;
  left: 3px;
  top: 0;
  font-size: 9px;
  line-height: 10px;
  color: #7aa7d2;
  white-space: nowrap;
}
.pv-dot {
  width: 7px;
  height: 7px;
  margin-top: 5px;
  border-radius: 50%;
  background: #000;
  border: 6px solid #444;
}
.pv-stroke {
  flex: 1;
}
.pv-stroke svg {
  display: block;
  width: 100%;
  height: 100%;
}

/* center */
.center {
  width: 587px;
  flex: none;
  display: flex;
  flex-direction: column;
  padding: 1px 0 0 2px;
  box-sizing: border-box;
}
.tabbar {
  height: 17px;
  flex: none;
}
.doc-tab {
  width: 292px;
  height: 16px;
  background: #333;
  text-align: center;
  font-size: 8.500px;
  line-height: 16px;
  color: #8e8e8e;
}
.canvas-row {
  height: 454px;
  flex: none;
  display: flex;
}
.canvas {
  width: 565px;
  height: 454px;
  flex: none;
  background: #fff;
  overflow: hidden;
}
.canvas svg {
  display: block;
}
.v-scroll {
  width: 14px;
  margin-left: 1px;
  display: flex;
  flex-direction: column;
  align-items: center;
  background: #2a2a2a;
  padding: 2px 0 1px;
  box-sizing: border-box;
}
.v-thumb {
  width: 13px;
  height: 105px;
  margin: 165px 0 auto;
  background: #727272;
  border-radius: 3px;
}
.h-scroll {
  height: 14px;
  width: 579px;
  flex: none;
  margin-top: 1px;
  display: flex;
  align-items: center;
  background: #2a2a2a;
  padding: 0 2px;
  box-sizing: border-box;
}
.left {
  border: 3px solid transparent;
  border-left: 0;
  border-right: 4px solid #888;
}
.right {
  border: 3px solid transparent;
  border-right: 0;
  border-left: 4px solid #aaa;
  margin-left: auto;
}
.h-thumb {
  width: 129px;
  height: 13px;
  margin-left: 226px;
  background: #727272;
  border-radius: 3px;
}

/* right column */
.rightcol {
  width: 264px;
  flex: none;
  display: flex;
  flex-direction: column;
  padding-top: 1px;
  box-sizing: border-box;
  background: #1c1c1c;
}
.p-nav {
  height: 109px;
  flex: none;
}
.nav-tools {
  height: 24px;
  flex: none;
  display: flex;
  align-items: center;
  padding-left: 3px;
  background: #2b2b2b;
}
.nav-tools .icon-btn {
  width: 18px;
  height: 18px;
  margin-right: 2px;
}
.nav-tools .mini-sep {
  margin: 0 4px 0 2px;
}
.nav-view {
  flex: 1;
  min-height: 0;
  background: #4a4a4a;
  display: flex;
  justify-content: flex-start;
}
.nav-page {
  width: 95px;
  height: 68px;
  margin-left: 89px;
  background: #fff;
  padding: 5px 0 0 15px;
  box-sizing: border-box;
}
.nav-frame {
  width: 69px;
  height: 55px;
  border: 2px solid #c02026;
  box-sizing: border-box;
  padding: 12px 0 0 16px;
}
.nav-frame svg {
  display: block;
  overflow: visible;
}
.p-layer {
  height: 181px;
  flex: none;
  margin-top: 1px;
}
.ly-row {
  height: 17px;
  display: flex;
  align-items: center;
  padding: 3px 0 0 5px;
  font-size: 9px;
}
.ly-row label {
  width: 68px;
  flex: none;
  color: #9a9a9a;
}
.ly-slider {
  width: 157px;
}
.ly-val {
  margin-left: 6px;
  color: #aaa;
}
.ly-row.blend {
  height: 15px;
  padding-top: 2px;
}
.ly-select {
  flex: 1;
  height: 15px;
  margin-left: 2px;
  background: #454545;
  display: flex;
  align-items: center;
  justify-content: space-between;
  padding: 0 2px;
  color: #9a9a9a;
  font-size: 8.500px;
}
.ly-checks {
  height: 21px;
  display: flex;
  align-items: center;
  padding-left: 3px;
  font-size: 8.500px;
  margin-top: 3px;
}
.lc {
  display: flex;
  align-items: center;
  gap: 4px;
  white-space: nowrap;
}
.lc .check {
  border-color: #ccc;
}
.lc .check.off {
  border-color: #444;
  margin-right: 0;
}
.alpha {
  width: 90px;
}
.clip {
  width: 89px;
}
.ly-listwrap {
  display: flex;
  padding-left: 3px;
}
.ly-list {
  width: 251px;
  height: 80px;
  flex: none;
  background: #4d4d4d;
  display: flex;
  flex-direction: column;
  gap: 1px;
}
.layer {
  height: 30px;
  flex: none;
  display: flex;
  background: #5a5a5a;
  color: #d0d0d0;
}
.layer.sel {
  background: #464646;
}
.eye {
  width: 14px;
  flex: none;
  display: flex;
  align-items: center;
  justify-content: center;
}
.eye i {
  width: 6px;
  height: 6px;
  border-radius: 50%;
  background: #ddd;
}
.layer-main {
  flex: 1;
  display: flex;
  align-items: center;
  position: relative;
  font-size: 9px;
}
.layer.sel .layer-main {
  background: #4a95d0;
  color: #fff;
  font-weight: 700;
}
.thumb {
  width: 27px;
  height: 19px;
  margin-left: 11px;
  background-color: #fff;
  display: block;
}
.thumb svg {
  display: block;
}
.lname {
  margin-left: 12px;
}
.l-one {
  position: absolute;
  right: 31px;
  bottom: 3px;
  font-size: 6px;
  font-weight: 400;
}
.l-chip {
  position: absolute;
  right: 20px;
  bottom: 3px;
  width: 7px;
  height: 7px;
  background: #000;
}
.l-gear {
  position: absolute;
  right: 2px;
  top: 8px;
}
.ly-scroll {
  width: 10px;
  height: 80px;
  background: #2a2a2a;
}
.ly-scroll b {
  width: 10px;
  height: 52px;
  margin: 1px 0 auto;
  background: #7e7e7e;
  border-radius: 3px;
}
.ly-tools {
  display: flex;
  align-items: center;
  padding: 2px 0 0 3px;
}
.ly-tools .icon-btn {
  margin-right: 3px;
}
.ly-tools .mini-sep {
  margin: 0 5px 0 2px;
}
.p-size {
  flex: 1;
  min-height: 0;
  margin-top: 3px;
  background: #4a4a4a;
}
.size-body {
  flex: 1;
  min-height: 0;
  display: flex;
  justify-content: space-between;
}
.size-grid {
  width: 243px;
  height: 114px;
  margin: 1px 0 0 1px;
  display: grid;
  grid-template-columns: repeat(8, 1fr);
  grid-template-rows: repeat(3, 1fr);
  gap: 1px;
}
.size-cell {
  background: #555;
  display: flex;
  flex-direction: column;
  align-items: center;
  color: #d8d8d8;
  font-size: 8px;
  min-width: 0;
}
.dot-wrap {
  height: 27px;
  display: flex;
  align-items: center;
  justify-content: center;
}
.dot {
  display: block;
  border-radius: 50%;
  background: #f0f0f0;
}
.size-label {
  line-height: 9px;
}
.size-scroll {
  width: 9px;
  background: #2a2a2a;
}
.size-scroll b {
  width: 9px;
  flex: 1;
  margin: 1px 0;
  background: #7e7e7e;
  border-radius: 3px;
}

/* status */
.statusbar {
  height: 14px;
  flex: none;
  margin-left: -1px;
  display: flex;
  align-items: center;
  gap: 8px;
  white-space: nowrap;
  font-size: 8.500px;
  color: #b0b0b0;
  background: #1e1e1e;
}

/* taskbar */
.taskbar {
  height: 23px;
  flex: none;
  display: flex;
  align-items: center;
  background: #cfe0e8;
}
.tk {
  flex: none;
}
.search {
  margin-left: 12px;
}
.cortana {
  width: 7px;
  height: 7px;
  margin-left: 14px;
  border: 2px solid #111;
  border-radius: 50%;
}
.taskview {
  margin-left: 14px;
}
.edge {
  margin-left: 15px;
}
.explorer {
  margin-left: 12px;
}
.store {
  margin-left: 13px;
}
.gift {
  margin-left: 14px;
}
.tk-app {
  height: 23px;
  display: flex;
  align-items: center;
  justify-content: center;
  box-sizing: border-box;
}
.run {
  width: 22px;
  margin-left: 9px;
  border-bottom: 2px solid #4a9fe0;
}
.mail {
  margin-left: 9px;
}
.current {
  width: 28px;
  margin-left: 6px;
  background: #e4eef2;
  border-bottom: 2px solid #4a9fe0;
}
.tray {
  margin-left: auto;
  display: flex;
  align-items: center;
  color: #1d2327;
  font-size: 9px;
  padding-right: 11px;
}
.t-vol {
  margin-left: 6px;
}
.t-net {
  margin-left: 5px;
}
.t-lang {
  margin-left: 11px;
}
.t-time {
  margin-left: 10px;
}
.t-note {
  margin-left: 17px;
}
</style>

<style>
html,
body {
  margin: 0;
  background: #1e1e1e;
}
</style>
